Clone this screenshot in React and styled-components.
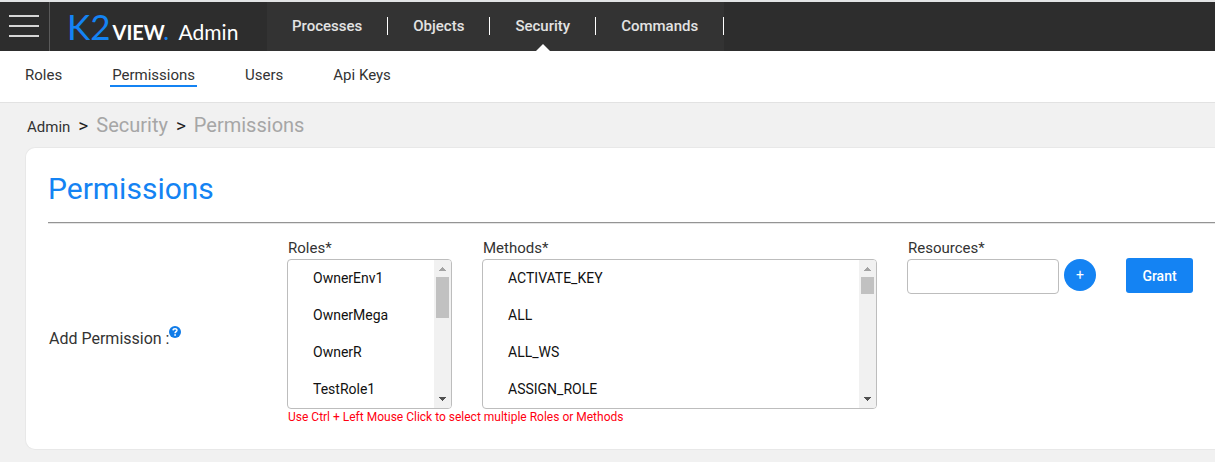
import React from "react";
import styled, { createGlobalStyle } from "styled-components";

const BLUE = "#1483f3";

const GlobalStyle = createGlobalStyle`
  * { box-sizing: border-box; }
  body {
    margin: 0;
    background: #f1f1f1;
    color: #333;
    font-family: Roboto, "Liberation Sans", sans-serif;
    font-size: 15px;
    line-height: 20px;
    overflow-x: hidden;
  }
  a { color: inherit; text-decoration: none; }
`;

const Header = styled.header`
  display: flex;
  height: 51px;
  border-top: 2px solid #e2e4e5;
  background: #2d2d2d;
`;

const MenuButton = styled.button`
  display: flex;
  flex-direction: column;
  justify-content: center;
  gap: 8px;
  width: 50px;
  padding: 0 10px 2px 9px;
  border: 0;
  border-right: 1px solid #5a5a5a;
  background: none;
`;

const MenuLine = styled.span`
  height: 2px;
  background: #d6d6d6;
`;

const Brand = styled.a`
  display: flex;
  align-items: baseline;
  width: 217px;
  padding-left: 17px;
  font-family: Lato, "Open Sans", sans-serif;
  color: #fff;
  line-height: 48px;
`;

const BrandMark = styled.span`
  color: ${BLUE};
  font-size: 35px;
`;

const BrandWord = styled.span`
  margin-left: 2px;
  font-size: 20px;
  font-weight: 700;
`;

const BrandDot = styled.span`
  color: ${BLUE};
`;

const BrandProduct = styled.span`
  margin-left: 10px;
  font-size: 21px;
`;

const MainNav = styled.nav`
  display: flex;
  align-items: stretch;
  background: #333;
`;

const MainLink = styled.a`
  position: relative;
  display: flex;
  align-items: center;
  padding-bottom: 2px;
  color: #e3e3e3;
  font-weight: 500;

  &::after {
    content: "";
    display: ${(p) => (p.$active ? "block" : "none")};
    position: absolute;
    bottom: 0;
    left: 50%;
    margin-left: -7px;
    border: 7px solid transparent;
    border-top-width: 0;
    border-bottom-color: #fff;
  }
`;

const MainItem = styled.div`
  display: flex;
  gap: 25px;
  padding-left: 25px;
`;

const Divider = styled.span`
  width: 1px;
  height: 18px;
  margin-top: 15px;
  background: #fff;
`;

const SubNav = styled.nav`
  display: flex;
  align-items: center;
  gap: 46px;
  height: 52px;
  padding: 0 23px 1px;
  border-bottom: 1px solid #e2e2e2;
  background: #fff;
`;

const SubLink = styled.a`
  padding: 0 2px;
  border-bottom: 2px solid ${(p) => (p.$active ? BLUE : "transparent")};
`;

const Breadcrumb = styled.nav`
  display: flex;
  align-items: baseline;
  gap: 8px;
  padding: 10px 27px 8px;
  line-height: 24px;
`;

const Crumb = styled.a`
  font-size: ${(p) => (p.$root ? 15 : 20)}px;
  color: ${(p) => (p.$root ? "#333" : "#a6a6a6")};
`;

const CrumbArrow = styled.span`
  color: #222;
  font-size: 19px;
`;

const Card = styled.main`
  margin: 0 0 12px 25px;
  padding: 21px 0 24px 22px;
  border: 1px solid #e8e8e8;
  border-right: 0;
  border-radius: 10px 0 0 10px;
  background: #fff;
`;

const Title = styled.h1`
  margin: 0;
  color: ${BLUE};
  font-size: 30px;
  font-weight: 400;
  line-height: 40px;
`;

const Rule = styled.hr`
  margin: 13px 0 14px;
  border: 0;
  border-top: 1px solid #949494;
  border-bottom: 1px solid #e4e4e4;
`;

const Form = styled.form`
  display: grid;
  grid-template-columns: 209px 165px 395px auto auto;
  column-gap: 30px;
  align-items: start;
  justify-content: start;
`;

const RowLabel = styled.div`
  display: flex;
  grid-row: 1 / 3;
  align-self: center;
  padding: 14px 0 0 1px;
  font-size: 16px;
`;

const Field = styled.div`
  display: flex;
  flex-direction: column;
  gap: 1px;
`;

const Label = styled.label`
  padding-left: 1px;
`;

const ListFrame = styled.div`
  display: flex;
  height: 150px;
  border: 1px solid #bdbdbd;
  border-radius: 4px;
  background: #fff;
  overflow: hidden;
`;

const ListBox = styled.select`
  flex: 1;
  min-width: 0;
  padding: 0;
  border: 0;
  background: none;
  font-family: inherit;
  font-size: 14px;
  outline: 0;

  option {
    height: 37px;
    padding: 10px 25px;
    color: #111;
  }
`;

const ScrollTrack = styled.div`
  display: flex;
  flex-direction: column;
  align-items: center;
  width: 17px;
  background: #f1f1f1;
`;

const ScrollThumb = styled.div`
  width: 13px;
  height: ${(p) => p.$size}px;
  margin-bottom: auto;
  background: #c1c1c1;
`;

const ScrollArrow = ({ down }) => (
  <svg width="17" height="17" viewBox="0 0 17 17" display="block" aria-hidden="true" shapeRendering="crispEdges">
    {down ? (
      <path d="M5 6H12V7H11V8H10V9H9V10H8V9H7V8H6V7H5z" fill="#505050" />
    ) : (
      <path d="M8 7H9V8H10V9H11V10H12V11H5V10H6V9H7V8H8z" fill="#a3a3a3" />
    )}
  </svg>
);

const InputRow = styled.div`
  display: flex;
  gap: 5px;
`;

const TextInput = styled.input`
  width: 152px;
  height: 35px;
  padding: 0 8px;
  border: 1px solid #bdbdbd;
  border-radius: 4px;
  font: inherit;
`;

const AddButton = styled.button`
  width: 32px;
  height: 32px;
  padding: 0;
  border: 0;
  border-radius: 50%;
  background: ${BLUE};
  color: #fff;
  font-family: inherit;
  font-size: 14px;
`;

const GrantButton = styled.button`
  width: 67px;
  height: 35px;
  margin-top: 20px;
  padding: 0;
  border: 0;
  border-radius: 3px;
  background: ${BLUE};
  color: #fff;
  font-family: inherit;
  font-size: 14px;
  font-weight: 500;
`;

const Hint = styled.p`
  grid-column: 2 / -1;
  margin: 0 0 0 1px;
  color: #f01;
  font-size: 12px;
  line-height: 16px;
`;

const HelpButton = styled.button`
  width: 12px;
  height: 12px;
  margin-top: -3px;
  padding: 0;
  border: 0;
  background: none;
`;

const HelpIcon = () => (
  <svg width="12" height="12" viewBox="0 0 12 12" display="block" aria-hidden="true">
    <circle cx="6" cy="6" r="6" fill="#0f7be8" />
    <path d="M4.1 4.4C4.2 2.2 8 2.2 7.9 4.4C7.8 5.6 6.1 5.7 6.1 7.3" fill="none" stroke="#fff" strokeWidth="1.6" />
    <rect x="5.3" y="8.2" width="1.6" height="1.6" fill="#fff" />
  </svg>
);

const sections = ["Processes", "Objects", "Security", "Commands"];
const pages = ["Roles", "Permissions", "Users", "Api Keys"];
const roles = ["OwnerEnv1", "OwnerMega", "OwnerR", "TestRole1"];
const methods = ["ACTIVATE_KEY", "ALL", "ALL_WS", "ASSIGN_ROLE"];

const ListField = ({ id, label, options, thumb }) => (
  <Field>
    <Label htmlFor={id}>{label}</Label>
    <ListFrame>
      <ListBox id={id} multiple>
        {options.map((name) => <option key={name}>{name}</option>)}
      </ListBox>
      <ScrollTrack>
        <ScrollArrow />
        <ScrollThumb $size={thumb} />
        <ScrollArrow down />
      </ScrollTrack>
    </ListFrame>
  </Field>
);

export default function App() {
  return (
    <>
      <GlobalStyle />
      <Header>
        <MenuButton type="button" aria-label="Menu">
          <MenuLine />
          <MenuLine />
          <MenuLine />
        </MenuButton>
        <Brand href="#home">
          <BrandMark>K2</BrandMark>
          <BrandWord>VIEW<BrandDot>.</BrandDot></BrandWord>
          <BrandProduct>Admin</BrandProduct>
        </Brand>
        <MainNav>
          {sections.map((name) => (
            <MainItem key={name}>
              <MainLink href={`#${name}`} $active={name === "Security"}>{name}</MainLink>
              <Divider />
            </MainItem>
          ))}
        </MainNav>
      </Header>
      <SubNav>
        {pages.map((name) => (
          <SubLink key={name} href={`#${name}`} $active={name === "Permissions"}>{name}</SubLink>
        ))}
      </SubNav>
      <Breadcrumb aria-label="Breadcrumb">
        <Crumb href="#admin" $root>Admin</Crumb>
        <CrumbArrow>&gt;</CrumbArrow>
        <Crumb href="#security">Security</Crumb>
        <CrumbArrow>&gt;</CrumbArrow>
        <Crumb href="#permissions">Permissions</Crumb>
      </Breadcrumb>
      <Card>
        <Title>Permissions</Title>
        <Rule />
        <Form>
          <RowLabel>
            Add Permission :
            <HelpButton type="button" aria-label="Help"><HelpIcon /></HelpButton>
          </RowLabel>
          <ListField id="roles" label="Roles*" options={roles} thumb={41} />
          <ListField id="methods" label="Methods*" options={methods} thumb={17} />
          <Field>
            <Label htmlFor="resources">Resources*</Label>
            <InputRow>
              <TextInput id="resources" />
              <AddButton type="button" aria-label="Add resource">+</AddButton>
            </InputRow>
          </Field>
          <GrantButton type="submit">Grant</GrantButton>
          <Hint>Use Ctrl + Left Mouse Click to select multiple Roles or Methods</Hint>
        </Form>
      </Card>
    </>
  );
}
